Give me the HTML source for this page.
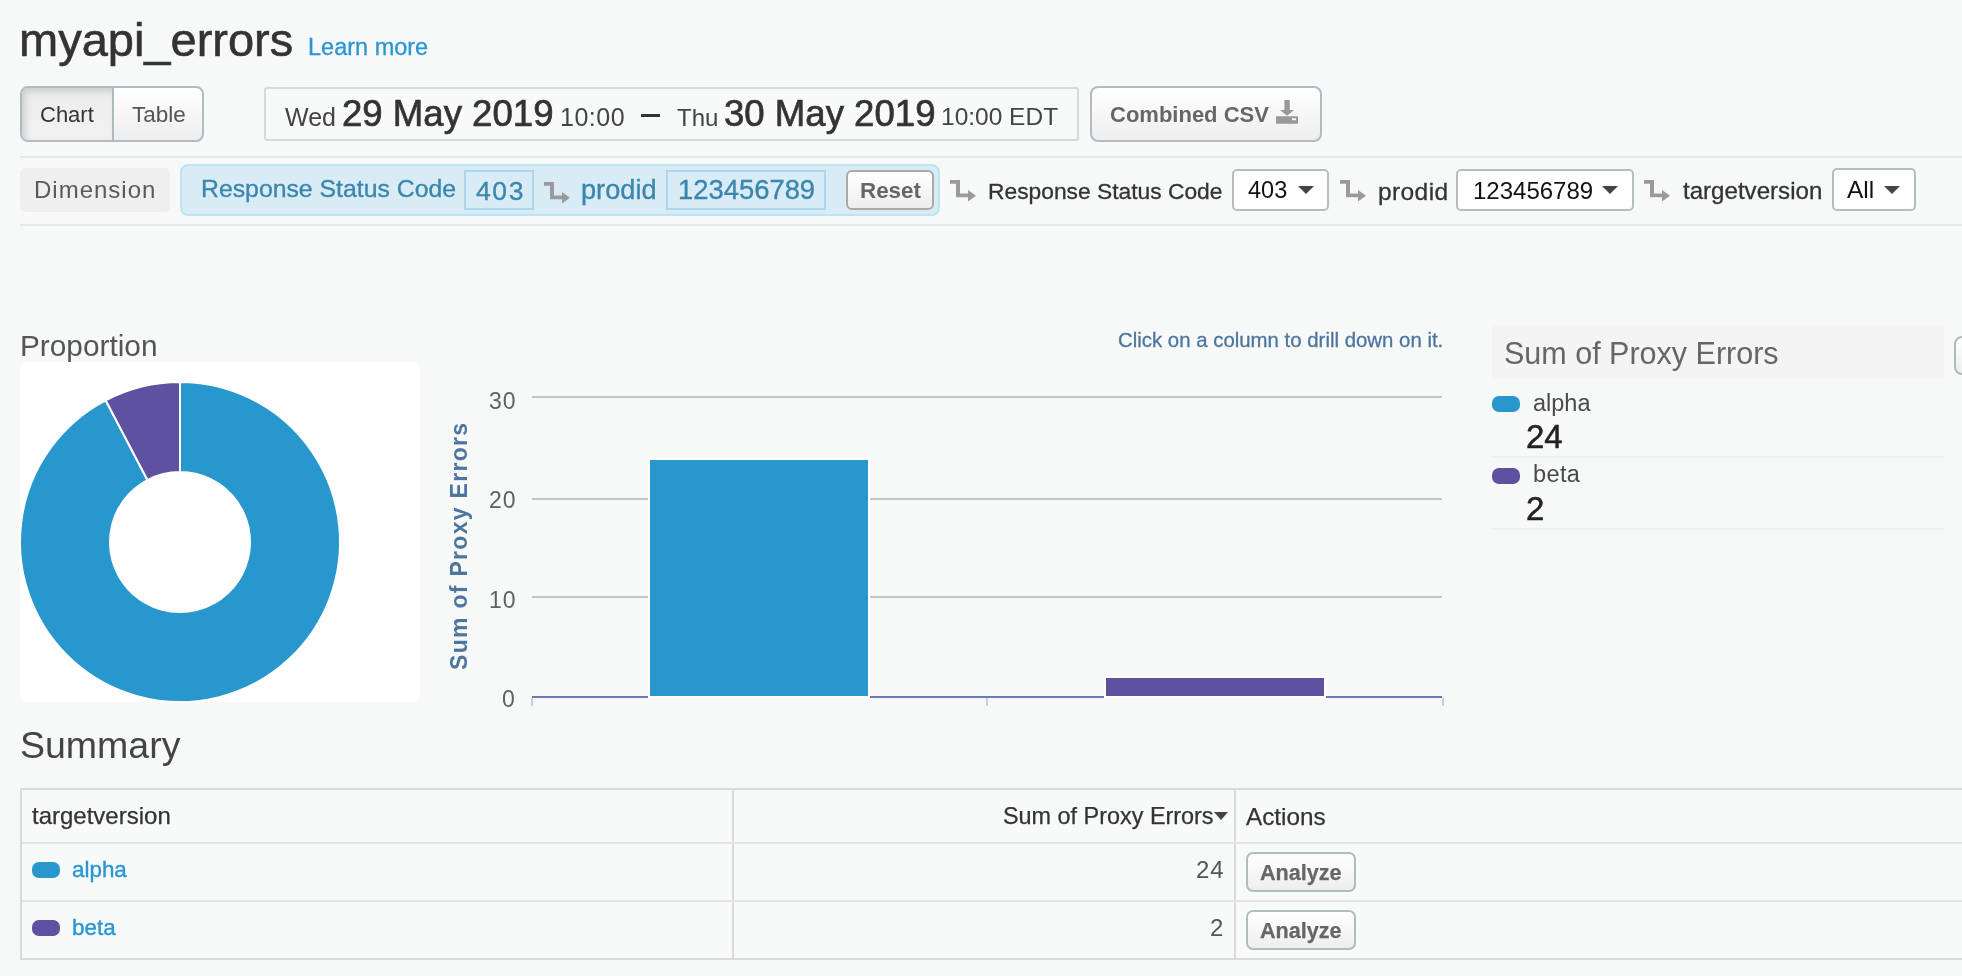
<!DOCTYPE html>
<html><head><meta charset="utf-8">
<style>
html,body{margin:0;padding:0;}
body{width:1962px;height:976px;overflow:hidden;background:#f7f8f8;font-family:"Liberation Sans",sans-serif;position:relative;}
.a{position:absolute;white-space:nowrap;line-height:1;will-change:transform;}
.hr{position:absolute;left:20px;right:0;height:2px;background:#e6e8e8;}
.btn{position:absolute;box-sizing:border-box;border:2px solid #b0bbc2;border-radius:8px;background:linear-gradient(#ffffff,#eeeeee);}
.sel{position:absolute;box-sizing:border-box;border:2px solid #b4bec5;border-radius:5px;background:#fff;}
.caret{position:absolute;width:0;height:0;border-left:8px solid transparent;border-right:8px solid transparent;border-top:8px solid #444;}
.ico{position:absolute;}
</style></head><body>

<!-- Title -->
<div class="a" style="left:19px;top:16px;font-size:47px;color:#333;-webkit-text-stroke:0.6px #333;">myapi_errors</div>
<div class="a" style="left:308px;top:36px;font-size:23.5px;color:#2996d3;-webkit-text-stroke:0.3px #2996d3;">Learn more</div>

<!-- Chart / Table -->
<div class="btn" style="left:20px;top:86px;width:184px;height:56px;overflow:hidden;">
  <div style="position:absolute;left:0;top:0;width:91px;height:52px;background:linear-gradient(#ececec,#f2f2f2);box-shadow:inset 3px 3px 7px rgba(0,0,0,0.15);"></div>
  <div style="position:absolute;left:90px;top:0;width:2px;height:52px;background:#adb9c1;"></div>
</div>
<div class="a" style="left:40px;top:104px;font-size:22px;color:#333;">Chart</div>
<div class="a" style="left:132px;top:104px;font-size:22.5px;color:#555;">Table</div>

<!-- Date box -->
<div style="position:absolute;left:264px;top:87px;width:815px;height:54px;box-sizing:border-box;border:2px solid #d8d8d8;border-radius:3px;background:#f8f9f9;"></div>
<div class="a" style="left:285px;top:105px;font-size:25px;color:#444;">Wed</div>
<div class="a" style="left:342px;top:96px;font-size:36.6px;color:#333;-webkit-text-stroke:0.7px #333;">29 May 2019</div>
<div class="a" style="left:560px;top:105px;font-size:25px;letter-spacing:0.5px;color:#444;">10:00</div>
<div style="position:absolute;left:641px;top:114px;width:19px;height:3px;background:#333;"></div>
<div class="a" style="left:677px;top:106px;font-size:24px;color:#444;">Thu</div>
<div class="a" style="left:724px;top:96px;font-size:36.6px;color:#333;-webkit-text-stroke:0.7px #333;">30 May 2019</div>
<div class="a" style="left:941px;top:105px;font-size:24.5px;color:#444;">10:00 EDT</div>

<!-- CSV button -->
<div class="btn" style="left:1090px;top:86px;width:232px;height:56px;"></div>
<div class="a" style="left:1110px;top:104px;font-size:22px;color:#666;font-weight:bold;">Combined CSV</div>
<svg class="ico" style="left:1276px;top:100px;" width="23" height="24" viewBox="0 0 23 24">
  <path d="M8.4,0 H13.8 V9.9 H18 L11.1,15.7 L4,9.9 H8.4 Z" fill="#999"/>
  <path d="M0,16.3 H22 V23.7 H0 Z M16,18.2 V20.3 H20 V18.2 Z" fill="#999" fill-rule="evenodd"/>
</svg>

<div class="hr" style="top:156px;"></div>
<div class="hr" style="top:224px;"></div>

<!-- Dimension -->
<div style="position:absolute;left:20px;top:168px;width:150px;height:44px;background:#efefef;border-radius:5px;"></div>
<div class="a" style="left:34px;top:178px;font-size:24px;color:#5a5a5a;letter-spacing:1px;">Dimension</div>

<!-- Blue breadcrumb -->
<div style="position:absolute;left:180px;top:164px;width:760px;height:52px;box-sizing:border-box;border:2px solid #bde5f1;border-radius:8px;background:#d9ebf5;"></div>
<div class="a" style="left:201px;top:177px;font-size:24.8px;color:#3a86ad;-webkit-text-stroke:0.35px #3a86ad;">Response Status Code</div>
<div style="position:absolute;left:464px;top:170px;width:70px;height:40px;box-sizing:border-box;border:2px solid #acd6ee;"></div>
<div class="a" style="left:476px;top:178px;font-size:26.5px;letter-spacing:1.6px;color:#3a86ad;-webkit-text-stroke:0.35px #3a86ad;">403</div>
<svg class="ico" style="left:544px;top:181px;" width="27" height="24" viewBox="0 0 27 24"><path d="M0,1 H10 V14.6 H18 V11 L26,16.8 L18,22.6 V18.3 H6 V4.7 H0 Z" fill="#9a9a9a"/></svg>
<div class="a" style="left:581px;top:176px;font-size:27.2px;color:#3a86ad;-webkit-text-stroke:0.35px #3a86ad;">prodid</div>
<div style="position:absolute;left:666px;top:170px;width:160px;height:40px;box-sizing:border-box;border:2px solid #acd6ee;"></div>
<div class="a" style="left:678px;top:176px;font-size:27.4px;color:#3a86ad;-webkit-text-stroke:0.35px #3a86ad;">123456789</div>
<div class="btn" style="left:846px;top:170px;width:88px;height:40px;border-color:#aaaaaa;border-radius:6px;"></div>
<div class="a" style="left:860px;top:180px;font-size:22.4px;color:#666;font-weight:bold;">Reset</div>

<!-- Selector chain -->
<svg class="ico" style="left:950px;top:179px;" width="27" height="24" viewBox="0 0 27 24"><path d="M0,1 H10 V14.6 H18 V11 L26,16.8 L18,22.6 V18.3 H6 V4.7 H0 Z" fill="#9a9a9a"/></svg>
<div class="a" style="left:988px;top:180px;font-size:22.8px;color:#333;-webkit-text-stroke:0.3px #333;">Response Status Code</div>
<div class="sel" style="left:1232px;top:169px;width:97px;height:42px;"></div>
<div class="a" style="left:1248px;top:179px;font-size:23.5px;color:#111;">403</div>
<div class="caret" style="left:1298px;top:186px;"></div>

<svg class="ico" style="left:1340px;top:179px;" width="27" height="24" viewBox="0 0 27 24"><path d="M0,1 H10 V14.6 H18 V11 L26,16.8 L18,22.6 V18.3 H6 V4.7 H0 Z" fill="#9a9a9a"/></svg>
<div class="a" style="left:1378px;top:180px;font-size:24.5px;letter-spacing:0.4px;color:#333;-webkit-text-stroke:0.3px #333;">prodid</div>
<div class="sel" style="left:1456px;top:169px;width:178px;height:42px;"></div>
<div class="a" style="left:1473px;top:179px;font-size:24px;color:#111;">123456789</div>
<div class="caret" style="left:1602px;top:186px;"></div>

<svg class="ico" style="left:1644px;top:179px;" width="27" height="24" viewBox="0 0 27 24"><path d="M0,1 H10 V14.6 H18 V11 L26,16.8 L18,22.6 V18.3 H6 V4.7 H0 Z" fill="#9a9a9a"/></svg>
<div class="a" style="left:1683px;top:179px;font-size:24.1px;color:#333;-webkit-text-stroke:0.3px #333;">targetversion</div>
<div class="sel" style="left:1832px;top:168px;width:84px;height:43px;"></div>
<div class="a" style="left:1847px;top:178px;font-size:24.5px;color:#111;">All</div>
<div class="caret" style="left:1884px;top:186px;"></div>

<!-- Proportion -->
<div class="a" style="left:20px;top:331px;font-size:29.8px;color:#555;">Proportion</div>
<div style="position:absolute;left:20px;top:362px;width:400px;height:340px;background:#fff;border-radius:8px;"></div>
<svg class="ico" style="left:0;top:0;" width="440" height="720" viewBox="0 0 440 720">
  <path d="M180,382 A160,160 0 1 1 105.644,400.327 L147.469,480.018 A70,70 0 1 0 180,472 Z" fill="#2797ce" stroke="#fff" stroke-width="2" stroke-linejoin="round"/>
  <path d="M105.644,400.327 A160,160 0 0 1 180,382 L180,472 A70,70 0 0 0 147.469,480.018 Z" fill="#5e52a0" stroke="#fff" stroke-width="2" stroke-linejoin="round"/>
</svg>

<!-- Bar chart -->
<div class="a" style="left:1118px;top:330px;font-size:20.4px;color:#4d759e;-webkit-text-stroke:0.3px #4d759e;">Click on a column to drill down on it.</div>
<svg class="ico" style="left:0;top:0;" width="1460" height="720" viewBox="0 0 1460 720">
  <g fill="#c6c6c6">
    <rect x="532" y="396" width="910" height="2"/>
    <rect x="532" y="498" width="910" height="2"/>
    <rect x="532" y="596" width="910" height="2"/>
  </g>
  <rect x="532" y="696" width="910" height="2" fill="#6c77ba"/>
  <rect x="531" y="698" width="2" height="8" fill="#c0d0e0"/>
  <rect x="986" y="698" width="2" height="8" fill="#c0d0e0"/>
  <rect x="1442" y="698" width="2" height="8" fill="#c0d0e0"/>
  <rect x="648" y="458" width="222" height="240" fill="#fff"/>
  <rect x="650" y="460" width="218" height="236" fill="#2797ce"/>
  <rect x="1104" y="676" width="222" height="22" fill="#fff"/>
  <rect x="1106" y="678" width="218" height="18" fill="#5e52a0"/>
</svg>
<div class="a" style="left:489px;top:390px;font-size:23px;letter-spacing:1px;color:#606060;">30</div>
<div class="a" style="left:489px;top:489px;font-size:23px;letter-spacing:1px;color:#606060;">20</div>
<div class="a" style="left:489px;top:589px;font-size:23px;letter-spacing:1px;color:#606060;">10</div>
<div class="a" style="left:502px;top:688px;font-size:23px;color:#606060;">0</div>
<div class="a" style="left:448px;top:670px;font-size:23px;letter-spacing:1.3px;color:#4d759e;font-weight:bold;transform:rotate(-90deg);transform-origin:0 0;">Sum of Proxy Errors</div>

<!-- Legend -->
<div style="position:absolute;left:1492px;top:326px;width:452px;height:52px;background:#f4f4f4;"></div>
<div class="a" style="left:1504px;top:338px;font-size:30.5px;color:#666;">Sum of Proxy Errors</div>
<div style="position:absolute;left:1954px;top:336px;width:30px;height:39px;box-sizing:border-box;border:2px solid #adb9c1;border-radius:8px;background:linear-gradient(#fff,#eee);"></div>
<div style="position:absolute;left:1492px;top:396px;width:28px;height:16px;border-radius:7px;background:#2797ce;"></div>
<div class="a" style="left:1533px;top:392px;font-size:23.5px;color:#4a4a4a;">alpha</div>
<div class="a" style="left:1526px;top:420px;font-size:33px;color:#222;-webkit-text-stroke:0.5px #222;">24</div>
<div style="position:absolute;left:1492px;top:456px;width:452px;height:2px;background:#eeefef;"></div>
<div style="position:absolute;left:1492px;top:468px;width:28px;height:16px;border-radius:7px;background:#5e52a0;"></div>
<div class="a" style="left:1533px;top:463px;font-size:23.5px;letter-spacing:0.4px;color:#4a4a4a;">beta</div>
<div class="a" style="left:1526px;top:492px;font-size:33px;color:#222;-webkit-text-stroke:0.5px #222;">2</div>
<div style="position:absolute;left:1492px;top:528px;width:452px;height:2px;background:#eeefef;"></div>

<!-- Summary -->
<div class="a" style="left:20px;top:727px;font-size:37.5px;color:#444;">Summary</div>
<div style="position:absolute;left:20px;top:788px;width:1960px;height:172px;box-sizing:border-box;border:2px solid #dadada;background:#f8f9f9;"></div>
<div style="position:absolute;left:732px;top:790px;width:2px;height:168px;background:#dadada;"></div>
<div style="position:absolute;left:1234px;top:790px;width:2px;height:168px;background:#dadada;"></div>
<div style="position:absolute;left:22px;top:842px;width:1940px;height:2px;background:#e4e4e4;"></div>
<div style="position:absolute;left:22px;top:900px;width:1940px;height:2px;background:#e4e4e4;"></div>
<div class="a" style="left:32px;top:804px;font-size:24px;color:#333;-webkit-text-stroke:0.25px #333;">targetversion</div>
<div class="a" style="left:1003px;top:805px;font-size:23.4px;color:#333;-webkit-text-stroke:0.25px #333;">Sum of Proxy Errors</div>
<div class="caret" style="left:1214px;top:812px;width:0;border-left-width:7px;border-right-width:7px;border-top-width:8px;"></div>
<div class="a" style="left:1246px;top:805px;font-size:24.3px;color:#333;-webkit-text-stroke:0.25px #333;">Actions</div>
<div style="position:absolute;left:32px;top:862px;width:28px;height:16px;border-radius:7px;background:#2797ce;"></div>
<div class="a" style="left:72px;top:859px;font-size:22.4px;color:#2996d3;-webkit-text-stroke:0.4px #2996d3;">alpha</div>
<div style="position:absolute;left:32px;top:920px;width:28px;height:16px;border-radius:7px;background:#5e52a0;"></div>
<div class="a" style="left:72px;top:917px;font-size:22.4px;color:#2996d3;-webkit-text-stroke:0.4px #2996d3;">beta</div>
<div class="a" style="left:1196px;top:858px;font-size:24px;letter-spacing:0.8px;color:#555;">24</div>
<div class="a" style="left:1210px;top:916px;font-size:24px;color:#555;">2</div>
<div class="btn" style="left:1246px;top:852px;width:110px;height:40px;border-radius:7px;"></div>
<div class="a" style="left:1260px;top:862px;font-size:21.6px;color:#666;font-weight:bold;-webkit-text-stroke:0.25px #666;">Analyze</div>
<div class="btn" style="left:1246px;top:910px;width:110px;height:40px;border-radius:7px;"></div>
<div class="a" style="left:1260px;top:920px;font-size:21.6px;color:#666;font-weight:bold;-webkit-text-stroke:0.25px #666;">Analyze</div>

</body></html>
